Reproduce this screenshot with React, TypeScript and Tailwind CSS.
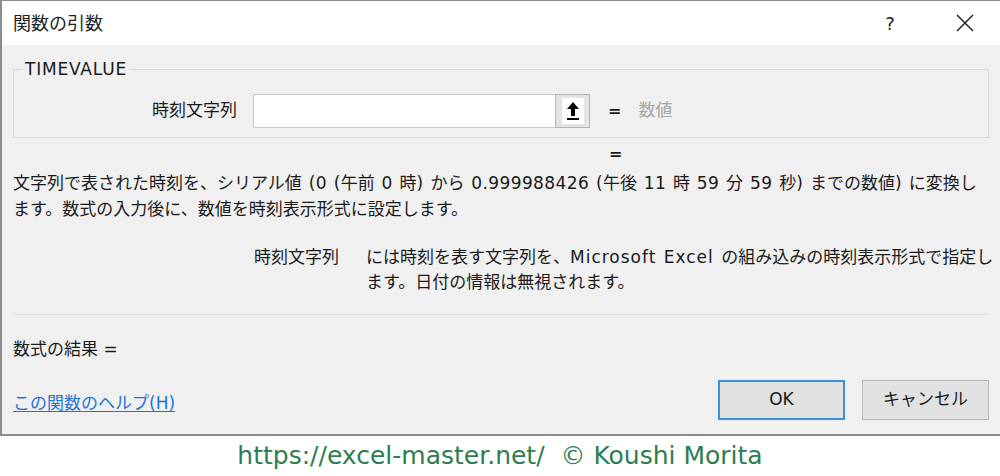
import React from 'react';

const jp = { fontFamily: '"DejaVu Sans", "Noto Sans CJK JP", sans-serif' };

// latin runs are a little wider in the original font
function L({ children }: { children: React.ReactNode }) {
  return <span className="tracking-[0.4px]">{children}</span>;
}

function UpArrow() {
  return (
    <svg width="16" height="20" viewBox="0 0 16 20">
      <path d="M8 1 L14 8 H10 V15 H6 V8 H2 Z" fill="#000" />
      <rect x="2" y="17" width="12" height="2" fill="#000" />
    </svg>
  );
}

function App() {
  return (
    <div className="w-[1000px] h-[476px] bg-white overflow-hidden text-[#1a1a1a]" style={jp}>
      <div className="w-[1001px] h-[436px] border-l-2 border-t border-b-2 border-[#8c8c8c] flex flex-col">
        {/* title bar */}
        <div className="h-[44px] bg-white flex items-center pl-[11px] shrink-0">
          <span className="text-[18px] text-[#222]">関数の引数</span>
          <div className="ml-auto flex items-center">
            <span className="text-[18px] text-[#222] w-[20px] mr-[56px] text-center">?</span>
            <svg width="18" height="18" viewBox="0 0 18 18" className="mr-[27px]">
              <path d="M1 1 L17 17 M17 1 L1 17" stroke="#222" strokeWidth="1.5" />
            </svg>
          </div>
        </div>

        {/* body */}
        <div className="flex-1 bg-[#f0f0f0] flex flex-col pl-[11px] pr-[12px]">
          <div className="relative mt-[24px] h-[69px] border border-[#dcdcdc] flex items-start pt-[24px]">
            <span className="absolute left-[8px] -top-[13px] bg-[#f0f0f0] px-[3px] text-[17px] tracking-[0.8px] leading-[24px]">TIMEVALUE</span>
            <div className="w-[224px] h-[34px] flex items-center justify-end text-[17px] pr-[1px]">時刻文字列</div>
            <div className="ml-[15px] flex h-[34px]">
              <div className="w-[302px] h-full bg-white border border-[#c8c8c8] border-r-0" />
              <div className="w-[35px] h-full bg-[#e4e4e4] border border-[#b4b4b4] flex items-center justify-center">
                <div className="bg-white w-[22px] h-[26px] flex items-center justify-center">
                  <UpArrow />
                </div>
              </div>
            </div>
            <span className="ml-[18px] h-[34px] flex items-center text-[16px] font-bold">=</span>
            <span className="ml-[17px] h-[34px] flex items-center text-[17px] text-[#a6a6a6]">数値</span>
          </div>

          <div className="h-[32px] flex items-center">
            <span className="ml-[596px] text-[16px] font-bold leading-none">=</span>
          </div>

          <p className="text-[17px] leading-[26px] whitespace-nowrap [word-spacing:1px]">
            文字列で表された時刻を、シリアル値<L> (0 (</L>午前<L> 0 </L>時<L>) </L>から<L> 0.999988426 (</L>午後<L> 11 </L>時<L> 59 </L>分<L> 59 </L>秒<L>) </L>までの数値<L>) </L>に変換し
            <br />
            ます。数式の入力後に、数値を時刻表示形式に設定します。
          </p>

          <div className="flex mt-[23px] text-[17px] leading-[25px]">
            <div className="w-[326px] text-right shrink-0">時刻文字列</div>
            <div className="ml-[27px] whitespace-nowrap [word-spacing:1px]">
              には時刻を表す文字列を、<span className="tracking-[1px]">Microsoft Excel </span>の組み込みの時刻表示形式で指定し
              <br />
              ます。日付の情報は無視されます。
            </div>
          </div>

          <div className="mt-[19px] h-px bg-[#e2e2e2]" />

          <div className="mt-[22px] text-[17px] leading-[24px]">数式の結果 =</div>

          <div className="mt-[19px] flex items-center">
            <a className="text-[17px] text-[#1f73d6] underline underline-offset-2 mt-[8px]">この関数のヘルプ(H)</a>
            <button className="ml-auto w-[127px] h-[40px] bg-[#e1e1e1] border-2 border-[#3c8fdc] text-[17px]" style={jp}>OK</button>
            <button className="ml-[17px] w-[127px] h-[40px] bg-[#e1e1e1] border border-[#b9b9b9] text-[17px]" style={jp}>キャンセル</button>
          </div>
        </div>
      </div>
      <div className="h-[40px] flex items-center justify-center">
        <span className="text-[25px] text-[#2e7d4f]" style={{ fontFamily: '"DejaVu Sans", sans-serif' }}>
          https://excel-master.net/&nbsp; © Koushi Morita
        </span>
      </div>
    </div>
  );
}

export default App;
